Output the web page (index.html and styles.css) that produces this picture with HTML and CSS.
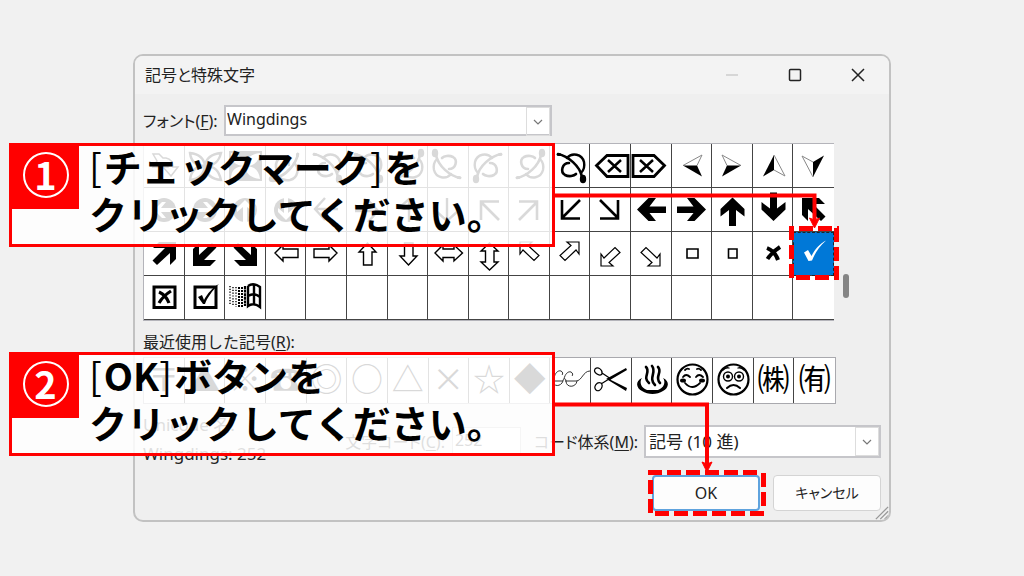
FILE: index.html
```html
<!DOCTYPE html>
<html lang="ja">
<head>
<meta charset="utf-8">
<title>記号と特殊文字</title>
<link rel="stylesheet" href="styles.css">
</head>
<body>
<svg class="defs" aria-hidden="true">
  <defs>
    <symbol id="curl" viewBox="0 0 40 44"><g fill="none" stroke="currentColor" stroke-linecap="round"><path stroke-width="2.6" d="M8 10C18 12 30 22 32 33"/><path stroke-width="2.4" d="M17 14C22 8 32 10 34 18C35 23 33 27 31 29"/><path stroke-width="2.6" d="M19 19C12 19 10 28 15 31C19 33 24 32 26 30"/></g><ellipse cx="33" cy="35" rx="3.2" ry="4.3" fill="currentColor"/><ellipse cx="9" cy="10.500" rx="2.500" ry="1.600" fill="currentColor"/></symbol>
    <symbol id="bentarrow" viewBox="0 0 40 44"><path fill="none" stroke="currentColor" stroke-width="1.5" d="M9 10H15L19 14H22C26 15 29 18 29 23H34L27 32L19 23H24C24 20 22 19 19 19L15 23H9L13 17Z"/></symbol>
    <symbol id="leaves" viewBox="0 0 40 44"><path fill="none" stroke="currentColor" stroke-width="2.4" d="M20 22C10 22 6 17 5 9C14 10 19 14 20 22ZM20 22C30 22 34 17 36 9C26 10 21 14 20 22ZM20 22C10 22 6 27 5 36C14 35 19 30 20 22ZM20 22C30 22 34 27 36 36C26 35 21 30 20 22Z"/></symbol>
    <symbol id="leavesbox" viewBox="0 0 40 44"><path fill="currentColor" fill-rule="evenodd" d="M4 7H37V37H4ZM20 22C10 22 6 17 6 9C14 10 19 14 20 22ZM20 22C30 22 34 17 35 9C26 10 21 14 20 22ZM20 22C10 22 6 27 6 35C14 34 19 30 20 22ZM20 22C30 22 34 27 35 35C26 34 21 30 20 22Z"/></symbol>
    <symbol id="del" viewBox="0 0 40 44"><path fill="none" stroke="currentColor" stroke-width="2.8" d="M6.500 21.500L17 11.500H38V32.500H17Z"/><path fill="none" stroke="currentColor" stroke-width="2.5" d="M18 16L31 28M31 16L18 28"/></symbol>
    <symbol id="dart" viewBox="0 0 40 44"><path fill="none" stroke="#888" stroke-width="1" d="M11 21.500L30 11L25 21.500"/><path fill="currentColor" d="M11 21.500H25L30 32.500Z"/></symbol>
    <symbol id="dartup" viewBox="0 0 40 44"><path fill="none" stroke="#888" stroke-width="1" d="M21 11L32 32L21 26"/><path fill="currentColor" d="M21 11V26L10 32.500Z"/></symbol>
    <symbol id="disc" viewBox="0 0 40 44"><circle cx="20" cy="22" r="12" fill="currentColor"/><path fill="#fff" d="M10 22L18 14H22L17 20H32V24H17L22 30H18Z"/></symbol>
    <symbol id="thin" viewBox="0 0 40 44"><path fill="none" stroke="currentColor" stroke-width="2.4" d="M9 21H32M19 10L9 21L19 32"/></symbol>
    <symbol id="thindiag" viewBox="0 0 40 44"><path fill="none" stroke="currentColor" stroke-width="2.6" d="M12 12V30.500H30M30 12L12 30"/></symbol>
    <symbol id="bold" viewBox="0 0 40 44"><path fill="currentColor" d="M6 21.500L17.500 10H25L18.500 18.500H35V25H18.500L25 33H17.500Z"/></symbol>
    <symbol id="boldup" viewBox="0 0 40 44"><path fill="currentColor" d="M20.500 9.500L32.500 21V28.500L24 22V38H17V22L8.500 28.500V21Z"/></symbol>
    <symbol id="bolddown" viewBox="0 0 40 44"><path fill="currentColor" d="M20.500 33L32.500 21.500V14L24 20.500V4.500H17V20.500L8.500 14V21.500Z"/></symbol>
    <symbol id="boldne" viewBox="0 0 40 44"><path fill="currentColor" d="M15 10H32V27L26 33V21L13 33L8.500 28.500L21 16H9Z"/></symbol>
    <symbol id="hollow" viewBox="0 0 40 44"><path fill="#fff" stroke="currentColor" stroke-width="1.400" d="M9 21L17 13V17H32V25.500H17V29Z"/></symbol>
    <symbol id="hollowup" viewBox="0 0 40 44"><path fill="#fff" stroke="currentColor" stroke-width="1.400" d="M20.500 11L29 20H25V33H16.500V20H12Z"/></symbol>
    <symbol id="hollowlr" viewBox="0 0 40 44"><path fill="#fff" stroke="currentColor" stroke-width="1.400" d="M7 21L15 13V17H26V13L34.500 21L26 29V25.500H15V29Z"/></symbol>
    <symbol id="hollowud" viewBox="0 0 40 44"><path fill="#fff" stroke="currentColor" stroke-width="1.400" d="M20.500 11L29 19H25V30H29L20.500 38L12 30H16.500V19H12Z"/></symbol>
    <symbol id="hollownw" viewBox="0 0 40 44"><path fill="#fff" stroke="currentColor" stroke-width="1.200" d="M11 10H23L19 13.500L30 23.500L25 28.500L14 18L11 22Z"/></symbol>
    <symbol id="rect" viewBox="0 0 40 44"><path fill="#fff" stroke="currentColor" stroke-width="1.600" d="M15 17H26V26H15Z"/></symbol>
    <symbol id="square" viewBox="0 0 40 44"><path fill="#fff" stroke="currentColor" stroke-width="1.600" d="M16.500 17H25V26H16.500Z"/></symbol>
    <symbol id="cross" viewBox="0 0 40 44"><path fill="none" stroke="currentColor" stroke-width="4" d="M14 16Q22 19 25 28M27 15Q19 20 14.500 27"/></symbol>
    <symbol id="check" viewBox="0 0 40 44"><path fill="currentColor" d="M10 20.500L14 18L17.500 24C21 17 26 11.500 32 8.500C25 15 21 21 18 28.500L14.500 29Z"/></symbol>
    <symbol id="boxcross" viewBox="0 0 40 44"><path fill="none" stroke="currentColor" stroke-width="3" d="M10 11H31V31.500H10Z"/><path fill="none" stroke="currentColor" stroke-width="3.200" d="M15 16Q22 19 25 27M27 15Q19 20 15 27"/></symbol>
    <symbol id="boxcheck" viewBox="0 0 40 44"><path fill="none" stroke="currentColor" stroke-width="3" d="M10 11H31V31.500H10Z"/><path fill="currentColor" d="M13 21L17 19L19 24C22 18 28 11 34 8C27 15 22 22 20 28H18Z"/></symbol>
    <symbol id="flag" viewBox="0 0 40 44"><g fill="none" stroke="currentColor"><path stroke-width="1.400" stroke-dasharray="1.200 1.600" d="M5 10V29M8 11V30M11 11V31"/><path stroke-width="2" stroke-dasharray="2 1" d="M14 11V31M17 11V31"/><path stroke-width="2.200" stroke-dasharray="3 .6" d="M20 10V30"/><path stroke-width="2.400" d="M23 10V30C27 27 31 28 35 31V11C31 8 27 7 23 10M29 9V29M23 20C28 17 31 18 35 21"/></g></symbol>
    <symbol id="glasses" viewBox="0 0 40 44"><g fill="none" stroke="#333" stroke-width="1"><path d="M3 23H13M15 23H26C32 23 33 13 40 13M4 20C5 15 8 12 11 13C13 14 13 16 12 17M14 21C15 16 18 13 21 14C23 15 23 17 22 18"/><path d="M3 23C3 29 11 29 13 23C13 20 16 20 16 23C16 30 26 30 27 23"/></g></symbol>
    <symbol id="scissors" viewBox="0 0 40 44"><g fill="none" stroke="currentColor"><path stroke-width="1.200" d="M4 11C7 8 12 12 11 16C8 19 2 14 4 11ZM5 32C9 35 13 28 10 25C6 23 2 29 5 32ZM11 15L20 21M10 26L18 21"/></g><path fill="currentColor" d="M15 21L35 10L36 12L19 22ZM16 20L36 30L35 33L17 22Z"/></symbol>
    <symbol id="onsen" viewBox="0 0 40 44"><path fill="currentColor" d="M10 20C7 24 9 30 15 32H26C32 30 34 24 31 20C38 23 37 30 31 33C25 37 16 37 10 33C4 30 3 23 10 20Z"/><g fill="none" stroke="currentColor" stroke-width="2.600" stroke-linecap="round"><path d="M14 9C19 14 10 19 17 25M20 8C25 14 16 20 23 27M26 9C31 14 22 19 28 25"/></g></symbol>
    <symbol id="smile" viewBox="0 0 40 44"><g fill="none" stroke="currentColor" stroke-linecap="round"><circle cx="20.500" cy="21.500" r="15" stroke-width="2.200"/><path stroke-width="1.800" d="M11 19Q14 15 18 19M24 19Q27 15 31 19M13 25Q20 33 28 25M13 12Q15 10 17 11M25 11Q27 10 29 12"/></g><ellipse cx="11" cy="22.500" rx="3" ry="2" fill="currentColor"/><ellipse cx="30" cy="22.500" rx="3" ry="2" fill="currentColor"/></symbol>
    <symbol id="sad" viewBox="0 0 40 44"><g fill="none" stroke="currentColor" stroke-linecap="round"><circle cx="20.500" cy="21.500" r="15" stroke-width="2.200"/><circle cx="15" cy="18.500" r="4.500" stroke-width="1.400"/><circle cx="26" cy="18.500" r="4.500" stroke-width="1.400"/><path stroke-width="2" d="M14 30Q20.500 24 27 30"/><path stroke-width="1.300" d="M10 12Q13 9 16 10M25 10Q28 9 31 12"/></g><circle cx="15" cy="18.500" r="2" fill="currentColor"/><circle cx="26" cy="18.500" r="2" fill="currentColor"/></symbol>
  </defs>
</svg>

<main class="page">
  <section class="dialog" aria-labelledby="title">
    <header class="titlebar">
      <h1 class="title" id="title">記号と特殊文字</h1>
      <div class="window-buttons">
        <button class="winbtn winbtn-off" aria-label="最小化" disabled><svg viewBox="0 0 14 14"><path d="M1 7H13"/></svg></button>
        <button class="winbtn" aria-label="最大化"><svg viewBox="0 0 14 14"><rect x="1.500" y="1.500" width="11" height="11" rx="1"/></svg></button>
        <button class="winbtn" aria-label="閉じる"><svg viewBox="0 0 14 14"><path d="M1 1L13 13M13 1L1 13"/></svg></button>
      </div>
    </header>

    <div class="content">
      <div class="font-row">
        <label for="font">フォント(<u>F</u>):</label>
        <div class="combo combo-font">
          <select id="font"><option>Wingdings</option></select>
          <span class="arrow"><svg viewBox="0 0 10 6"><path d="M1 1L5 5L9 1"/></svg></span>
        </div>
      </div>

      <div class="symbols">
        <div class="grid">
          <span class="cell"><svg><use href="#bentarrow"/></svg></span>
          <span class="cell"><svg><use href="#leaves"/></svg></span>
          <span class="cell"><svg><use href="#leavesbox"/></svg></span>
          <span class="cell"><svg class="r90"><use href="#curl"/></svg></span>
          <span class="cell"><svg><use href="#curl"/></svg></span>
          <span class="cell"><svg><use href="#curl"/></svg></span>
          <span class="cell"><svg class="flop"><use href="#curl"/></svg></span>
          <span class="cell"><svg class="r180"><use href="#curl"/></svg></span>
          <span class="cell"><svg class="flip"><use href="#curl"/></svg></span>
          <span class="cell"><svg class="flop"><use href="#curl"/></svg></span>
          <span class="cell"><svg><use href="#curl"/></svg></span>
          <span class="cell"><svg><use href="#del"/></svg></span>
          <span class="cell"><svg class="flip"><use href="#del"/></svg></span>
          <span class="cell"><svg><use href="#dart"/></svg></span>
          <span class="cell"><svg class="flip"><use href="#dart"/></svg></span>
          <span class="cell"><svg><use href="#dartup"/></svg></span>
          <span class="cell"><svg class="r180"><use href="#dartup"/></svg></span>

          <span class="cell"><svg><use href="#disc"/></svg></span>
          <span class="cell"><svg class="r180"><use href="#disc"/></svg></span>
          <span class="cell"><svg class="r90"><use href="#disc"/></svg></span>
          <span class="cell"><svg class="r270"><use href="#disc"/></svg></span>
          <span class="cell"><svg><use href="#thin"/></svg></span>
          <span class="cell"><svg class="r180"><use href="#thin"/></svg></span>
          <span class="cell"><svg class="r90"><use href="#thin"/></svg></span>
          <span class="cell"><svg class="r270"><use href="#thin"/></svg></span>
          <span class="cell"><svg class="flop"><use href="#thindiag"/></svg></span>
          <span class="cell"><svg class="r180"><use href="#thindiag"/></svg></span>
          <span class="cell"><svg><use href="#thindiag"/></svg></span>
          <span class="cell"><svg class="flip"><use href="#thindiag"/></svg></span>
          <span class="cell"><svg><use href="#bold"/></svg></span>
          <span class="cell"><svg class="flip"><use href="#bold"/></svg></span>
          <span class="cell"><svg><use href="#boldup"/></svg></span>
          <span class="cell"><svg><use href="#bolddown"/></svg></span>
          <span class="cell"><svg class="flip"><use href="#boldne"/></svg></span>

          <span class="cell"><svg><use href="#boldne"/></svg></span>
          <span class="cell"><svg class="r180"><use href="#boldne"/></svg></span>
          <span class="cell"><svg class="flop"><use href="#boldne"/></svg></span>
          <span class="cell"><svg><use href="#hollow"/></svg></span>
          <span class="cell"><svg class="flip"><use href="#hollow"/></svg></span>
          <span class="cell"><svg><use href="#hollowup"/></svg></span>
          <span class="cell"><svg class="flop"><use href="#hollowup"/></svg></span>
          <span class="cell"><svg><use href="#hollowlr"/></svg></span>
          <span class="cell"><svg><use href="#hollowud"/></svg></span>
          <span class="cell"><svg><use href="#hollownw"/></svg></span>
          <span class="cell"><svg class="flip"><use href="#hollownw"/></svg></span>
          <span class="cell"><svg class="flop"><use href="#hollownw"/></svg></span>
          <span class="cell"><svg class="r180"><use href="#hollownw"/></svg></span>
          <span class="cell"><svg><use href="#rect"/></svg></span>
          <span class="cell"><svg><use href="#square"/></svg></span>
          <span class="cell"><svg><use href="#cross"/></svg></span>
          <span class="cell cell-selected"><svg><use href="#check"/></svg></span>

          <span class="cell"><svg><use href="#boxcross"/></svg></span>
          <span class="cell"><svg><use href="#boxcheck"/></svg></span>
          <span class="cell"><svg><use href="#flag"/></svg></span>
          <span class="cell"></span><span class="cell"></span><span class="cell"></span><span class="cell"></span><span class="cell"></span><span class="cell"></span><span class="cell"></span>
          <span class="cell"></span><span class="cell"></span><span class="cell"></span><span class="cell"></span><span class="cell"></span><span class="cell"></span><span class="cell"></span>
        </div>
        <div class="scroll"><span class="thumb"></span></div>
      </div>

      <p class="recent-label">最近使用した記号(<u>R</u>):</p>
      <div class="recent">
        <span class="cell">〒</span>
        <span class="cell">▲</span>
        <span class="cell">※</span>
        <span class="cell">☎</span>
        <span class="cell">◎</span>
        <span class="cell">○</span>
        <span class="cell">△</span>
        <span class="cell">×</span>
        <span class="cell">☆</span>
        <span class="cell">◆</span>
        <span class="cell"><svg><use href="#glasses"/></svg></span>
        <span class="cell"><svg><use href="#scissors"/></svg></span>
        <span class="cell"><svg><use href="#onsen"/></svg></span>
        <span class="cell"><svg><use href="#smile"/></svg></span>
        <span class="cell"><svg><use href="#sad"/></svg></span>
        <span class="cell">㈱</span>
        <span class="cell">㈲</span>
      </div>

      <div class="code-row">
        <div class="names"><span>Unicode 名:</span><span>Wingdings: 252</span></div>
        <label for="code">文字コード(<u>C</u>):</label>
        <input class="code" id="code" type="text" value="252">
        <label class="system-label" for="system">コード体系(<u>M</u>):</label>
        <div class="combo combo-system">
          <select id="system"><option>記号 (10 進)</option></select>
          <span class="arrow"><svg viewBox="0 0 10 6"><path d="M1 1L5 5L9 1"/></svg></span>
        </div>
      </div>

      <div class="actions">
        <button class="btn btn-default">OK</button>
        <button class="btn btn-cancel">キャンセル</button>
      </div>
    </div>
    <svg class="grip" viewBox="0 0 16 16" aria-hidden="true"><path d="M1 15L15 1M6 15L15 6M11 15L15 11"/></svg>
  </section>

  <svg class="marks" viewBox="0 0 1024 576" aria-hidden="true">
    <path class="line" d="M555 195.500H814.500V222"/>
    <path class="head" d="M809.500 218L814.500 220L819.500 218L814.500 228Z"/>
    <path class="dash" d="M791.500 226V278M799 228.500H839M836.500 228V281M796 277.500H834"/>
    <path class="line" d="M555 404.500H707V466"/>
    <path class="head" d="M702 462L707 464L712 462L707 472Z"/>
    <path class="dash" d="M648 472.500H760M763.500 473V511M650.500 480V515M655 513.500H766"/>
  </svg>

  <div class="callout callout-first">
    <div class="tag"><span class="num">1</span></div>
    <p class="step"><span class="br">[</span>チェックマーク<span class="br">]</span>を<br>クリックしてください。</p>
  </div>
  <div class="callout callout-second">
    <div class="tag"><span class="num">2</span></div>
    <p class="step"><span class="br">[</span>OK<span class="br">]</span>ボタンを<br>クリックしてください。</p>
  </div>
</main>
</body>
</html>
```

FILE: styles.css
```css
* { box-sizing: border-box; }

body {
  margin: 0;
  background: #f1f1f1;
  color: #222;
  font: 16px/24px "Noto Sans", "Noto Sans CJK JP", sans-serif;
  font-feature-settings: "palt";
}

p, h1 { margin: 0; }
u { text-underline-offset: 2px; }
.defs { position: absolute; width: 0; height: 0; }

.page {
  position: relative;
  min-height: 100vh;
  padding: 54px 133px;
}

/* Dialog window */
.dialog {
  position: relative;
  border: 2px solid #c2c2c2;
  border-radius: 10px;
  background: #efefef;
  overflow: hidden;
}

.titlebar {
  display: flex;
  justify-content: space-between;
  align-items: center;
  height: 38px;
  padding: 0 24px 0 10px;
  background: #f3f3f3;
}
.title { font-size: 16px; line-height: 24px; font-weight: 400; }
.window-buttons { display: flex; gap: 49px; }
.winbtn {
  width: 14px;
  height: 14px;
  padding: 0;
  border: 0;
  background: none;
}
.winbtn svg { display: block; fill: none; stroke: #222; stroke-width: 1.5; }
.winbtn-off svg { stroke: #ccc; }

.content { padding: 11px 8px 9px; }

.font-row { display: flex; align-items: center; gap: 6px; }
.font-row label { width: 75px; white-space: nowrap; }

.combo {
  display: grid;
  grid-template-columns: 1fr 24px;
  border: 2px solid #c6c6ca;
  background: #fff;
}
.combo select {
  grid-area: 1 / 1 / 2 / 3;
  appearance: none;
  border: 0;
  background: none;
  color: inherit;
  font: inherit;
  font-feature-settings: inherit;
}
.combo-font { width: 328px; height: 31px; }
.combo-font select { padding: 0 1px 5px; }
.combo-system { width: 237px; height: 33px; }
.combo-system select { padding: 0 3px; font-size: 17px; }
.arrow {
  grid-area: 1 / 2;
  display: grid;
  place-items: center;
  border: 1px solid #ddd;
  pointer-events: none;
}
.arrow svg { width: 10px; height: 6px; fill: none; stroke: #777; stroke-width: 1.2; }

/* Symbol table */
.symbols { display: flex; margin-top: 7px; }
.grid {
  flex: 1;
  min-width: 0;
  display: grid;
  grid-template-columns: repeat(17, minmax(0, 1fr));
  grid-auto-rows: 44px;
  border: solid #b4b4ba;
  border-width: 1px 0 1px 1px;
  background: #fff;
}
.cell {
  display: grid;
  place-items: center;
  border-right: 1px solid #444;
  border-bottom: 1px solid #444;
  color: #000;
}
.cell:nth-child(17n) { border-right: 0; }
.cell svg { width: 40px; height: 44px; }
.cell-selected { background: #0078d7; color: #fff; outline: 1px dashed #222; outline-offset: -1px; }
.flip { transform: scaleX(-1); }
.flop { transform: scaleY(-1); }
.r90 { transform: rotate(90deg); }
.r180 { transform: rotate(180deg); }
.r270 { transform: rotate(270deg); }

.scroll { flex: 0 0 47px; padding: 131px 9px 0; }
.thumb { display: block; width: 6px; height: 24px; border-radius: 3px; background: #858585; }

.recent-label { margin: 9px 0 3px; font-feature-settings: normal; }
.recent {
  display: grid;
  grid-template-columns: repeat(17, minmax(0, 1fr));
  margin-right: 45px;
  border: 1px solid #a9a9ae;
  background: #fff;
}
.recent .cell {
  height: 45px;
  border-bottom: 0;
  align-items: start;
  font: 32px/38px "Noto Sans CJK JP", sans-serif;
  font-feature-settings: normal;
}

.code-row { display: flex; align-items: center; margin-top: 9px; white-space: nowrap; }
.names {
  flex: 1;
  display: grid;
  gap: 5px;
  margin-bottom: 4px;
  font-size: 17px;
}
.code {
  width: 69px;
  height: 29px;
  margin: 0 13px 0 7px;
  padding: 0 2px 4px;
  border: 1px solid #bbb;
  background: #fff;
  color: inherit;
  font: inherit;
}
.system-label { margin-right: 6px; }

.actions { display: flex; justify-content: flex-end; gap: 13px; margin-top: 5px; }
.btn {
  width: 108px;
  height: 36px;
  border: 1px solid #d4d4d4;
  border-radius: 4px;
  background: #fdfdfd;
  color: inherit;
  font: inherit;
  font-feature-settings: inherit;
}
.btn-default { border: 2px solid #5fa3de; }
.btn-cancel { font-size: 14px; }

.grip {
  position: absolute;
  right: 0;
  bottom: 0;
  width: 14px;
  height: 14px;
  fill: none;
  stroke: #999;
  stroke-width: 1.5;
}

/* Red annotations over the dialog */
.marks { position: absolute; left: 0; top: 0; width: 1024px; height: 576px; pointer-events: none; }
.line { fill: none; stroke: #f00; stroke-width: 4; }
.head { fill: #f00; stroke: #f00; }
.dash { fill: none; stroke: #f00; stroke-width: 5; stroke-dasharray: 14 5; }

.callout {
  position: absolute;
  left: 9px;
  display: flex;
  align-items: flex-start;
  width: 546px;
  height: 104px;
  border: 3px solid #f00;
  background: rgba(255, 255, 255, 0.85);
}
.callout-first { top: 143px; }
.callout-second { top: 352px; }
.tag {
  display: grid;
  place-items: center;
  flex: 0 0 67px;
  height: 63px;
  padding: 0 0 6px;
  background: #f00;
}
.num {
  width: 46px;
  height: 46px;
  border: 2px solid #fff;
  border-radius: 50%;
  color: #fff;
  font: 700 38px/40px "Noto Sans CJK JP", sans-serif;
  text-align: center;
}
.step {
  margin-top: -4px;
  padding-left: 10px;
  color: #000;
  font: 700 38px/47px "Noto Sans CJK JP", sans-serif;
  font-feature-settings: normal;
  white-space: nowrap;
}
.br { padding-right: 2px; font-weight: 400; }
```
